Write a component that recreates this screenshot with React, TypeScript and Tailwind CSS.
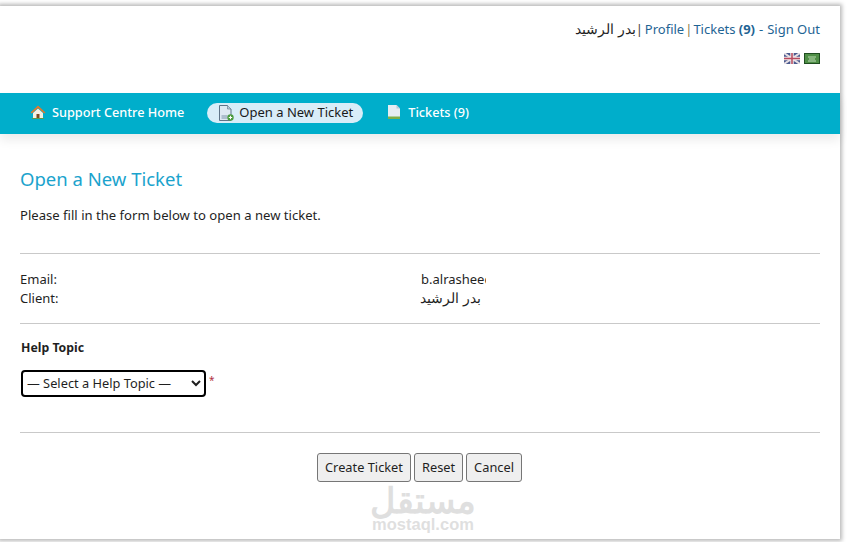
import React from 'react';

const HomeIcon = () => (
  <svg width="16" height="16" viewBox="0 0 16 16">
    <path d="M3 9 8 4.500 13 9v5H3z" fill="#f5efe2" />
    <path d="M8 1.500 .5 8.500l1.200 1L8 4l6.300 5.500 1.200-1z" fill="#e0792c" />
    <path d="M6.500 14v-4h3v4z" fill="#7a4a22" />
    <path d="M2 14.500h12" stroke="#5f9a4a" strokeWidth="1" />
  </svg>
);

const NewTicketIcon = () => (
  <svg width="16" height="16" viewBox="0 0 16 16">
    <path d="M1.500 .5h8l3.500 3.500v11.500h-11.500z" fill="#dfe9f2" stroke="#5f7488" strokeWidth="1" />
    <path d="M9.500 .5v3.500h3.500" fill="#bccbd8" stroke="#5f7488" strokeWidth=".6" />
    <path d="M3.500 11h6M3.500 13h6" stroke="#7c93a8" strokeWidth="1" />
    <circle cx="12.500" cy="12.500" r="3.200" fill="#4c9c3f" />
    <path d="M12.500 10.800v3.400M10.800 12.500h3.400" stroke="#fff" strokeWidth="1" />
  </svg>
);

const TicketsIcon = () => (
  <svg width="14" height="16" viewBox="0 0 14 16">
    <path d="M1 1h8.500L13 4.500V15H1z" fill="#e6edf3" />
    <path d="M1 12.500h12V15H1z" fill="#7fae4a" />
    <path d="M9.500 1v3.500H13z" fill="#b9c9d6" />
  </svg>
);

const UkFlag = () => (
  <svg width="16" height="11" viewBox="0 0 16 11">
    <rect width="16" height="11" fill="#4a5a8e" />
    <path d="M0 0l16 11M16 0 0 11" stroke="#e6dfe4" strokeWidth="2" />
    <path d="M8 0v11M0 5.500h16" stroke="#efe8ea" strokeWidth="3.500" />
    <path d="M8 0v11M0 5.500h16" stroke="#b84a5e" strokeWidth="1.500" />
  </svg>
);

const SaFlag = () => (
  <svg width="16" height="11" viewBox="0 0 16 11">
    <rect width="16" height="11" fill="#1f4d20" />
    <rect x="1" y="1" width="14" height="9" fill="#4f8f46" />
    <path d="M4 4h8M5 6h6" stroke="#bcdcb2" strokeWidth="1" />
    <path d="M4 8h8" stroke="#e0efdb" strokeWidth="0.800" />
  </svg>
);

export default function App() {
  return (
    <div className="relative h-[542px] w-[847px] overflow-hidden bg-white pt-[6px] font-['Noto_Sans','Noto_Sans_CJK_SC',sans-serif] text-[13px] text-[#1f1f1f]">
      <div className="h-[533px] w-[840px] bg-white shadow-[0_0_4px_2px_rgba(0,0,0,0.28)]">

        {/* Header */}
        <div className="h-[87px] px-5 pt-[13px]">
          <div className="flex justify-end text-[13px] leading-[20px]">
            <span dir="rtl" className="text-[13.500px]">بدر الرشيد</span>
            <span className="mr-[2px] text-[#444]">|</span>
            <a className="text-[#1f6494]">Profile</a>
            <span className="mx-[1px] text-[#8a7a4a]">|</span>
            <a className="text-[#1f6494]">Tickets <b>(9)</b></a>
            <span className="mx-[4px] text-[#1f6494]">-</span>
            <a className="text-[#1f6494]">Sign Out</a>
          </div>
          <div className="mt-[14px] flex justify-end gap-[4px]">
            <UkFlag />
            <SaFlag />
          </div>
        </div>

        {/* Nav */}
        <nav className="flex h-[41px] items-center bg-[#00aecb] pb-[2px] pl-[30px] shadow-[0_6px_10px_rgba(0,0,0,0.08)]">
          <a className="flex items-center gap-[6px] font-medium text-white">
            <HomeIcon />
            <span className="text-[12.700px]">Support Centre Home</span>
          </a>
          <a className="ml-[23px] flex h-[20px] items-center gap-[5px] rounded-full bg-[#d9edf8] pl-[11px] pr-[10px] text-[#1a1a1a]">
            <NewTicketIcon />
            <span>Open a New Ticket</span>
          </a>
          <a className="ml-[24px] flex items-center gap-[7px] font-medium text-white">
            <TicketsIcon />
            <span className="text-[12.700px]">Tickets (9)</span>
          </a>
        </nav>

        {/* Content */}
        <main className="px-5">
          <h1 className="mt-[32px] text-[18.500px] leading-[25px] text-[#1ba3cd]">Open a New Ticket</h1>
          <p className="mt-[15px] text-[13.100px] leading-[18px]">Please fill in the form below to open a new ticket.</p>

          <hr className="mt-[29px] border-[#c9c9c9]" />

          <div className="mt-[16px] grid grid-cols-[401px_1fr] text-[13px] leading-[19px]">
            <span>Email:</span>
            <span className="w-[65px] overflow-hidden whitespace-nowrap">b.alrasheed</span>
            <span>Client:</span>
            <span dir="rtl" className="w-[60px] whitespace-nowrap text-[13.500px]">بدر الرشيد</span>
          </div>

          <hr className="mt-[15px] border-[#c9c9c9]" />

          <div className="mt-[15px] pl-px text-[12.300px] font-bold leading-[18px]">Help Topic</div>
          <div className="mt-[13px] flex items-start gap-[3px] pl-px">
            <select className="h-[27px] w-[185px] rounded-[4px] border-2 border-black bg-white pb-[1px] text-[12.800px] text-[#1f1f1f]">
              <option>— Select a Help Topic —</option>
            </select>
            <span className="mt-[3px] text-[10px] leading-[14px] text-[#b03040]">*</span>
          </div>

          <hr className="mt-[35px] border-[#c9c9c9]" />

          <div className="mt-[20px] flex justify-center gap-[3px] pr-[1px]">
            <button className="h-[29px] rounded-[3px] border border-[#767676] bg-[#efefef] px-[7px] text-[12.800px]">Create Ticket</button>
            <button className="h-[29px] rounded-[3px] border border-[#767676] bg-[#efefef] px-[7px] text-[12.800px]">Reset</button>
            <button className="h-[29px] rounded-[3px] border border-[#767676] bg-[#efefef] px-[7px] text-[12.800px]">Cancel</button>
          </div>
        </main>
      </div>

      {/* Watermark */}
      <div className="absolute left-[371px] top-[483px] flex w-[104px] flex-col items-center text-[#dfdfdf]">
        <span dir="rtl" className="text-[35px] font-bold leading-[33px]">مستقل</span>
        <span className="font-['Liberation_Sans',sans-serif] text-[16.500px] font-bold leading-[16px]">mostaql.com</span>
      </div>
    </div>
  );
}
